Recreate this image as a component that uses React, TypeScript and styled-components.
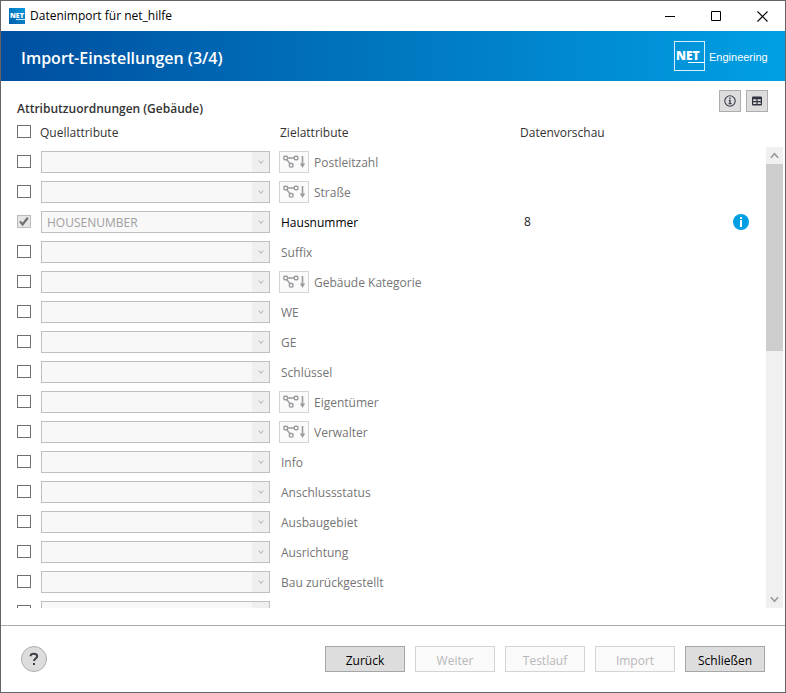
import React, { useState } from 'react';
import styled, { createGlobalStyle, css } from 'styled-components';

const GlobalStyle = createGlobalStyle`
  * { box-sizing: border-box; }
  body { margin: 0; background: #fff; }
  body, button, select, input { font-family: "Open Sans", "Noto Sans", sans-serif; font-size: 12px; }
`;

const Window = styled.div`
  display: flex;
  flex-direction: column;
  height: 100vh;
  border: 1px solid #646466;
  background: #fff;
  color: #333;
  overflow: hidden;
`;

const TitleBar = styled.div`
  display: flex;
  align-items: center;
  flex: none;
  height: 30px;
  padding-left: 8px;
  color: #000;
`;

const WindowTitle = styled.span`
  flex: 1;
  margin-left: 5px;
  line-height: 16px;
`;

const CaptionButton = styled.button`
  display: grid;
  place-items: center;
  width: 46px;
  height: 30px;
  padding: 0;
  border: 0;
  background: transparent;
`;

const Banner = styled.header`
  display: flex;
  align-items: center;
  justify-content: space-between;
  flex: none;
  height: 50px;
  padding: 0 12px 0 20px;
  background: linear-gradient(90deg, #004f9f 0%, #009fe3 100%);
  color: #fff;
`;

const BannerTitle = styled.h1`
  margin: 0;
  padding-top: 4px;
  font-size: 16px;
  line-height: 22px;
  font-weight: 600;
`;

const SectionHead = styled.div`
  display: flex;
  flex: none;
  height: 36px;
  padding: 9px 17px 0 16px;
`;

const SectionTitle = styled.h2`
  flex: 1;
  align-self: flex-end;
  margin: 0;
  font-size: 12px;
  line-height: 16px;
  font-weight: 600;
`;

const Tools = styled.div`
  display: flex;
  gap: 5px;
`;

const ToolButton = styled.button`
  display: grid;
  place-items: center;
  width: 22px;
  height: 22px;
  padding: 0;
  border: 1px solid #adadad;
  background: #ddd;
`;

const ListArea = styled.main`
  display: flex;
  flex: 1;
  min-height: 0;
  padding: 0 2px 17px 16px;
`;

const Table = styled.table`
  display: flex;
  flex-direction: column;
  flex: 1;
  min-width: 0;
  thead, tbody { display: block; }
  tbody { flex: 1; min-height: 0; overflow: hidden; }
`;

const Row = styled.tr`
  display: grid;
  grid-template-columns: 23px 239px 240px 1fr 33px;
  align-items: center;
  height: 30px;
`;

const HeadCell = styled.th<{ $inset?: boolean }>`
  padding: 2px 0 0 ${p => (p.$inset ? 1 : 0)}px;
  font-weight: 400;
  text-align: left;
  line-height: 18px;
`;

const Cell = styled.td`
  display: flex;
  align-items: center;
  padding: 0;
  line-height: 18px;
`;

const CheckCell = styled(Cell)`
  height: 30px;
  padding-bottom: 1px;
`;

const PreviewCell = styled(Cell)`
  padding-left: 5px;
  color: #222;
`;

const Check = styled.input`
  appearance: none;
  display: block;
  width: 14px;
  height: 13px;
  margin: 0;
  border: 1px solid #707070;
  background: #fff;
  &:checked {
    border-color: #bcbcbc;
    background: #e6e6e6 url("data:image/svg+xml,%3Csvg xmlns='http://www.w3.org/2000/svg' viewBox='0 0 12 11'%3E%3Cpath d='M2 5.4 4.6 8.4 9.8 1.8' fill='none' stroke='%23707070' stroke-width='2.2'/%3E%3C/svg%3E") center / 12px 11px no-repeat;
  }
`;

const Combo = styled.div`
  display: grid;
  grid-template-columns: 1fr 17px;
  width: 229px;
  height: 22px;
  margin-left: 1px;
  border: 1px solid #bfbfbf;
  background: #f8f8f8;
`;

const ComboSelect = styled.select`
  appearance: none;
  grid-area: 1 / 1 / 2 / 3;
  padding: 1px 20px 0 5px;
  border: 0;
  background: transparent;
  color: #a0a0a0;
  opacity: 1;
`;

const ComboArrow = styled.span`
  grid-area: 1 / 2;
  display: grid;
  place-items: center;
  background: #efefef;
  pointer-events: none;
`;

const LinkButton = styled.button`
  display: grid;
  place-items: center;
  width: 30px;
  height: 22px;
  padding: 0;
  border: 1px solid #d4d4d4;
  background: #fafafa;
`;

const Target = styled.span<{ $linked?: boolean; $active?: boolean }>`
  padding: 2px 0 0 ${p => (p.$linked ? 5 : 2)}px;
  color: ${p => (p.$active ? '#000' : '#757575')};
`;

const InfoButton = styled.button`
  display: block;
  width: 16px;
  height: 16px;
  padding: 0;
  border: 0;
  background: transparent;
`;

const ScrollBar = styled.div`
  display: flex;
  flex-direction: column;
  width: 17px;
  margin-top: 30px;
  background: #f0f0f0;
`;

const ScrollButton = styled.button`
  display: grid;
  place-items: center;
  flex: none;
  height: 17px;
  padding: 0;
  border: 0;
  background: transparent;
`;

const ScrollTrack = styled.div`
  flex: 1;
`;

const ScrollThumb = styled.div`
  height: 43.8%;
  background: #cdcdcd;
`;

const Footer = styled.footer`
  display: flex;
  align-items: center;
  justify-content: space-between;
  flex: none;
  height: 67px;
  padding: 0 20px;
  border-top: 1px solid #acacac;
`;

const HelpButton = styled.button`
  display: grid;
  place-items: center;
  width: 26px;
  height: 26px;
  padding: 0;
  border: 1px solid #adadad;
  border-radius: 50%;
  background: #ddd;
`;

const Actions = styled.div`
  display: flex;
  gap: 10px;
`;

const ActionButton = styled.button`
  width: 80px;
  height: 26px;
  padding: 2px 0 0;
  border: 1px solid #a6a6a6;
  background: #ddd;
  color: #000;
  ${p => p.disabled && css`
    border-color: #d4d4d4;
    background: #fafafa;
    color: #b8b8b8;
  `}
`;

const AppIcon = () => (
  <svg width="16" height="16" viewBox="0 0 16 16" aria-hidden="true">
    <defs>
      <linearGradient id="appIcon" x1="0" y1="1" x2="1" y2="0">
        <stop offset="0" stopColor="#005ca9" />
        <stop offset="1" stopColor="#0a9ade" />
      </linearGradient>
    </defs>
    <rect width="16" height="16" fill="url(#appIcon)" />
    <text x="1" y="10" fill="#fff" fontFamily="Open Sans, sans-serif" fontWeight="800" fontSize="7">NET</text>
    <path d="M7 11.5h9" stroke="#cde8f7" />
  </svg>
);

const Logo = () => (
  <svg width="100" height="32" viewBox="0 0 100 32" role="img" aria-label="NET Engineering">
    <rect x="1.5" y="1.5" width="30" height="29" fill="none" stroke="#d9f0fb" />
    <text x="3" y="20" fill="#fff" fontFamily="Open Sans, sans-serif" fontWeight="800" fontSize="12">NET</text>
    <path d="M15 22.5h16" stroke="#fff" />
    <text x="36" y="21" fill="#fff" fontFamily="Liberation Sans, sans-serif" fontSize="11">Engineering</text>
  </svg>
);

const Chevron = ({ up, size = 6, color }: { up?: boolean; size?: number; color: string }) => (
  <svg width={size} height={size} viewBox="0 0 8 8" aria-hidden="true">
    <path d={up ? 'M.8 6 4 2.4 7.2 6' : 'M.8 2 4 5.6 7.2 2'} fill="none" stroke={color} strokeWidth="1.5" />
  </svg>
);

const RelationIcon = () => (
  <svg width="24" height="16" viewBox="0 0 24 16" fill="none" stroke="#999b9f" strokeWidth="1.4" aria-hidden="true">
    <rect x="1.9" y="2.2" width="3.6" height="3.6" rx="1" />
    <rect x="12.3" y="2.2" width="3.6" height="3.6" rx="1" />
    <rect x="7.4" y="9.500" width="3.6" height="3.6" rx="1" />
    <path d="M5.500 4h6.800M5 5.800 7.800 9.500" />
    <path d="M20.500 2v9" strokeWidth="1.600" />
    <path d="M17.800 9.500h5.400l-2.700 4.500z" fill="#999b9f" stroke="none" />
  </svg>
);

type Attribute = { name: string; linked?: boolean; source?: string; preview?: string };

const attributes: Attribute[] = [
  { name: 'Postleitzahl', linked: true },
  { name: 'Straße', linked: true },
  { name: 'Hausnummer', source: 'HOUSENUMBER', preview: '8' },
  { name: 'Suffix' },
  { name: 'Gebäude Kategorie', linked: true },
  { name: 'WE' },
  { name: 'GE' },
  { name: 'Schlüssel' },
  { name: 'Eigentümer', linked: true },
  { name: 'Verwalter', linked: true },
  { name: 'Info' },
  { name: 'Anschlussstatus' },
  { name: 'Ausbaugebiet' },
  { name: 'Ausrichtung' },
  { name: 'Bau zurückgestellt' },
  { name: '' },
];

const AttributeRow = ({ name, linked, source, preview }: Attribute) => {
  const [checked, setChecked] = useState(false);
  return (
    <Row>
      <CheckCell>
        <Check
          type="checkbox"
          aria-label={name || 'Attribut'}
          checked={!!source || checked}
          disabled={!!source}
          onChange={e => setChecked(e.target.checked)}
        />
      </CheckCell>
      <Cell>
        <Combo>
          <ComboSelect disabled aria-label={`Quellattribut ${name}`}>
            <option>{source}</option>
          </ComboSelect>
          <ComboArrow><Chevron color="#bcbcbc" /></ComboArrow>
        </Combo>
      </Cell>
      <Cell>
        {linked && <LinkButton disabled aria-label={`Verknüpfung ${name}`}><RelationIcon /></LinkButton>}
        <Target $linked={linked} $active={!!source}>{name}</Target>
      </Cell>
      <PreviewCell>{preview}</PreviewCell>
      <Cell>
        {preview && (
          <InfoButton aria-label="Information">
            <svg width="16" height="16" viewBox="0 0 16 16" aria-hidden="true">
              <circle cx="8" cy="8" r="8" fill="#009fe3" />
              <path d="M7 3h2v2H7zM7 6h2v7H7z" fill="#fff" />
            </svg>
          </InfoButton>
        )}
      </Cell>
    </Row>
  );
};

export default function App() {
  const [all, setAll] = useState(false);
  return (
    <>
      <GlobalStyle />
      <Window>
        <TitleBar>
          <AppIcon />
          <WindowTitle>Datenimport für net_hilfe</WindowTitle>
          <CaptionButton aria-label="Minimieren">
            <svg width="11" height="11"><path d="M0 5.500h10" stroke="#000" /></svg>
          </CaptionButton>
          <CaptionButton aria-label="Maximieren">
            <svg width="11" height="11"><path d="M.5.5h9v9h-9z" fill="none" stroke="#000" /></svg>
          </CaptionButton>
          <CaptionButton aria-label="Fenster schließen">
            <svg width="11" height="11"><path d="M.5.5l10 10M10.5.5l-10 10" stroke="#000" strokeWidth="1.1" /></svg>
          </CaptionButton>
        </TitleBar>
        <Banner>
          <BannerTitle>Import-Einstellungen (3/4)</BannerTitle>
          <Logo />
        </Banner>
        <SectionHead>
          <SectionTitle>Attributzuordnungen (Gebäude)</SectionTitle>
          <Tools>
            <ToolButton aria-label="Information">
              <svg width="12" height="12" viewBox="0 0 12 12" fill="none" stroke="#3b3f4a">
                <circle cx="6" cy="6" r="5.2" strokeWidth="1.1" />
                <path d="M6 2.6v1.5M4.8 5.5H6v3M4.6 8.7h2.900" strokeWidth="1.3" />
              </svg>
            </ToolButton>
            <ToolButton aria-label="Tabelle">
              <svg width="10" height="10" viewBox="0 0 10 10">
                <path d="M1 .5h8a1 1 0 0 1 1 1v7a1 1 0 0 1-1 1H1a1 1 0 0 1-1-1v-7a1 1 0 0 1 1-1z" fill="#303441" />
                <path d="M1.2 3.200h3.200v1.700H1.200zM5.600 3.200h3.200v1.700H5.600zM1.200 6.200h3.200v1.800H1.200zM5.600 6.200h3.200v1.800H5.600z" fill="#ddd" />
              </svg>
            </ToolButton>
          </Tools>
        </SectionHead>
        <ListArea>
          <Table>
            <thead>
              <Row>
                <CheckCell as="th">
                  <Check type="checkbox" aria-label="Alle auswählen" checked={all} onChange={e => setAll(e.target.checked)} />
                </CheckCell>
                <HeadCell>Quellattribute</HeadCell>
                <HeadCell $inset>Zielattribute</HeadCell>
                <HeadCell $inset>Datenvorschau</HeadCell>
              </Row>
            </thead>
            <tbody>
              {attributes.map((a, i) => <AttributeRow key={i} {...a} />)}
            </tbody>
          </Table>
          <ScrollBar>
            <ScrollButton aria-label="Nach oben"><Chevron up size={9} color="#9a9a9a" /></ScrollButton>
            <ScrollTrack><ScrollThumb /></ScrollTrack>
            <ScrollButton aria-label="Nach unten"><Chevron size={9} color="#9a9a9a" /></ScrollButton>
          </ScrollBar>
        </ListArea>
        <Footer>
          <HelpButton aria-label="Hilfe">
            <svg width="12" height="14" viewBox="0 0 12 14" fill="none" stroke="#3b3f4a" strokeWidth="2" aria-hidden="true">
              <path d="M2.5 4.2C2.6 2.6 4 1.8 5.9 1.8c2 0 3.3 1 3.3 2.5C9.2 6.500 6 6.500 6 9" />
              <path d="M6 11v2" />
            </svg>
          </HelpButton>
          <Actions>
            <ActionButton>Zurück</ActionButton>
            <ActionButton disabled>Weiter</ActionButton>
            <ActionButton disabled>Testlauf</ActionButton>
            <ActionButton disabled>Import</ActionButton>
            <ActionButton>Schließen</ActionButton>
          </Actions>
        </Footer>
      </Window>
    </>
  );
}
